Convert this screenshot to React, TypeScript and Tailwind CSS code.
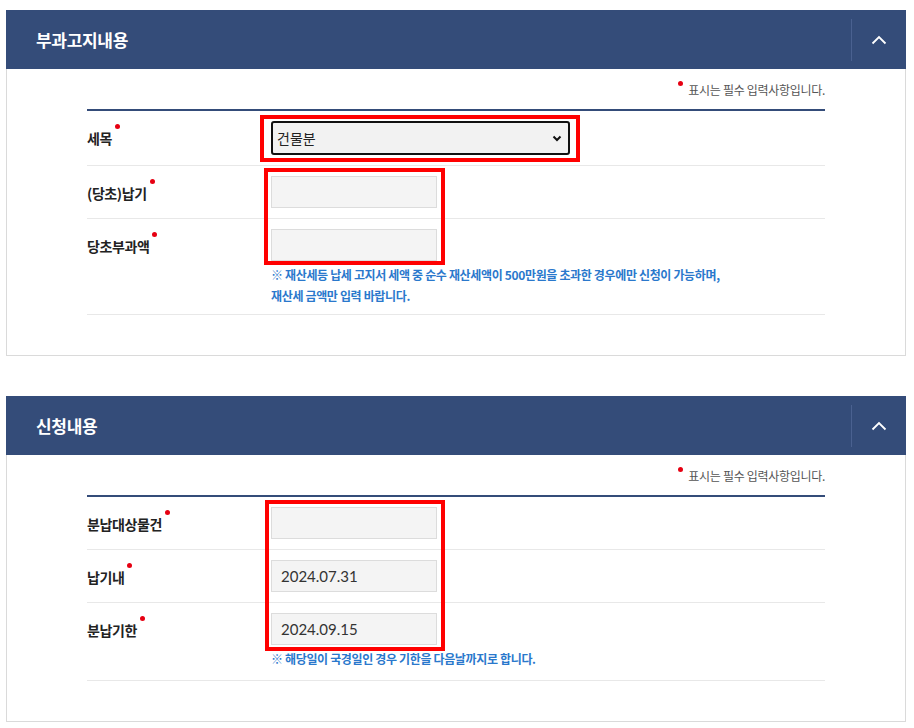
import type { ReactNode } from 'react'

const font = { fontFamily: '"Noto Sans CJK KR", "Noto Sans", sans-serif' }

function Chevron() {
  return (
    <svg width="16" height="10" viewBox="0 0 16 10" fill="none">
      <polyline points="1.5,8.5 8,2 14.5,8.5" stroke="white" strokeWidth="1.8" />
    </svg>
  )
}

function Label({ text }: { text: string }) {
  return (
    <div className="relative inline-block text-[14px] font-bold text-[#222] tracking-[-0.4px]">
      {text}
      <span className="absolute -right-[8px] -top-[4px] h-[5px] w-[5px] rounded-full bg-[#e60012]" />
    </div>
  )
}

function TextBox({ value }: { value?: string }) {
  return (
    <div
      className="flex h-[32px] w-[166px] items-center border border-[#dcdcdc] bg-[#f4f4f4] pl-[9px] text-[15px] text-[#333]"
      style={{ fontFamily: 'Lato, "Noto Sans CJK KR", sans-serif' }}
    >
      {value}
    </div>
  )
}

function Row({ label, children, note, pb = 'pb-[10px]' }: { label: string; children: ReactNode; note?: ReactNode; pb?: string }) {
  return (
    <div className={`flex border-b border-[#e8e8e8] pt-[10px] ${pb}`}>
      <div className="flex h-[32px] w-[184px] items-center pt-[2px]">
        <Label text={label} />
      </div>
      <div>
        {children}
        {note}
      </div>
    </div>
  )
}

function Note({ lines }: { lines: string[] }) {
  return (
    <div className="mt-[3px] text-[12px] font-bold leading-[21px] tracking-[-0.35px] text-[#2a78cc]">
      {lines.map((l) => (
        <div key={l}>{l}</div>
      ))}
    </div>
  )
}

function Panel({ title, children }: { title: string; children: ReactNode }) {
  return (
    <div className="w-[900px]">
      <div className="flex h-[59px] items-center justify-between bg-[#344c79]">
        <div className="pl-[30px] text-[17px] font-bold tracking-[-0.3px] text-white">{title}</div>
        <div className="flex h-[42px] w-[55px] items-center justify-center border-l border-[#4a6190]">
          <Chevron />
        </div>
      </div>
      <div className="border-x border-b border-[#dadada] px-[80px] pb-[40px]">
        <div className="flex h-[40px] items-center justify-end pt-[1px] text-[12px] tracking-[-0.3px] text-[#555]">
          <span className="relative">
            <span className="absolute -left-[10px] top-[0px] h-[5px] w-[5px] rounded-full bg-[#e60012]" />
            표시는 필수 입력사항입니다.
          </span>
        </div>
        <div className="relative border-t-2 border-[#344c79]">{children}</div>
      </div>
    </div>
  )
}

export default function App() {
  return (
    <div className="min-h-[728px] bg-white pl-[6px] pt-[10px]" style={font}>
      <Panel title="부과고지내용">
        <Row label="세목">
          <div className="flex h-[34px] w-[299px] items-center justify-between rounded-[3px] border-2 border-[#111] bg-[#f2f2f2] pl-[4px] pr-[6px] text-[14px] text-[#222]">
            <span>건물분</span>
            <svg width="10" height="7" viewBox="0 0 10 7">
              <polyline points="1.5,1.5 5,5 8.5,1.5" stroke="#111" strokeWidth="2" fill="none" />
            </svg>
          </div>
        </Row>
        <Row label="(당초)납기">
          <TextBox />
        </Row>
        <Row
          label="당초부과액"
          pb="pb-[8px]"
          note={
            <Note
              lines={[
                '※ 재산세등 납세 고지서 세액 중 순수 재산세액이 500만원을 초과한 경우에만 신청이 가능하며,',
                '재산세 금액만 입력 바랍니다.',
              ]}
            />
          }
        >
          <TextBox />
        </Row>
        <div className="pointer-events-none absolute left-[173px] top-[4px] h-[47px] w-[320px] border-4 border-[#ff0000]" />
        <div className="pointer-events-none absolute left-[177px] top-[57px] h-[97px] w-[181px] border-4 border-[#ff0000]" />
      </Panel>
      <div className="h-[40px]" />
      <Panel title="신청내용">
        <Row label="분납대상물건">
          <TextBox />
        </Row>
        <Row label="납기내">
          <TextBox value="2024.07.31" />
        </Row>
        <Row
          label="분납기한"
          pb="pb-[11px]"
          note={<Note lines={['※ 해당일이 국경일인 경우 기한을 다음날까지로 합니다.']} />}
        >
          <TextBox value="2024.09.15" />
        </Row>
        <div className="pointer-events-none absolute left-[178px] top-[3px] h-[151px] w-[180px] border-4 border-[#ff0000]" />
      </Panel>
    </div>
  )
}
